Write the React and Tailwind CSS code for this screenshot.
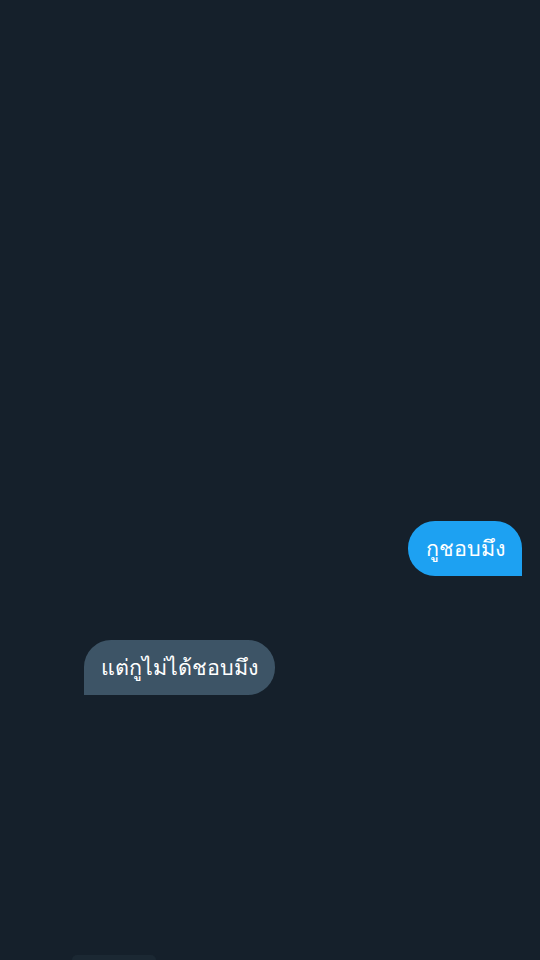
export default function App() {
  return (
    <div className="w-[540px] h-[960px] bg-[#15202b] overflow-hidden flex flex-col font-['DejaVu_Sans',monospace]">
      <div className="h-[521px] shrink-0" />
      <div className="flex justify-end pr-[18px]">
        <div className="h-[55px] w-[114px] bg-[#1da1f2] rounded-[27px] rounded-br-none flex items-center justify-center text-white text-[21.5px] leading-none">
          กูชอบมึง
        </div>
      </div>
      <div className="h-[64px] shrink-0" />
      <div className="flex pl-[84px]">
        <div className="h-[55px] w-[191px] bg-[#3d5466] rounded-[27px] rounded-bl-none flex items-center justify-center text-white text-[21.5px] leading-none">
          แต่กูไม่ได้ชอบมึง
        </div>
      </div>
      <div className="flex-1" />
      <div className="flex pl-[72px]">
        <div className="h-[5px] w-[84px] rounded-t-full bg-[#1b2833]" />
      </div>
    </div>
  );
}
